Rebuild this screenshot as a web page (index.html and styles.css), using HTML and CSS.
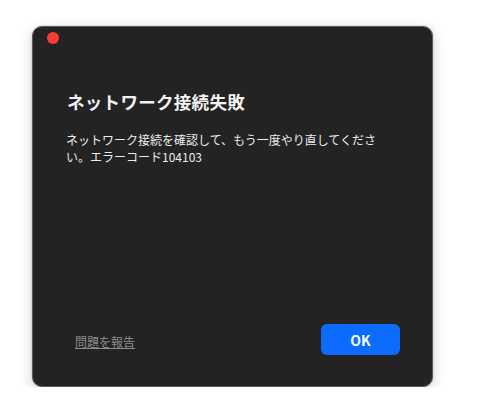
FILE: index.html
```html
<!DOCTYPE html>
<html lang="ja">
<head>
<meta charset="utf-8">
<link rel="stylesheet" href="styles.css">
</head>
<body>
<div class="window">
  <div class="titlebar"><span class="close-dot"></span></div>
  <div class="content">
    <h1 class="title">ネットワーク接続失敗</h1>
    <p class="message">ネットワーク接続を確認して、もう一度やり直してください。エラーコード104103</p>
  </div>
  <div class="footer">
    <a class="report-link" href="#">問題を報告</a>
    <button class="ok-button" type="button">OK</button>
  </div>
</div>
</body>
</html>
```

FILE: styles.css
```css
html, body {
  margin: 0;
  padding: 0;
  background: #ffffff;
}
body {
  font-family: "Noto Sans CJK JP", "Noto Sans", sans-serif;
  padding: 26px 0 0 32px;
}
.window {
  box-sizing: border-box;
  width: 401px;
  height: 361px;
  background: #232323;
  border: 1px solid #5c5c5c;
  border-radius: 10px;
  box-shadow: 0 4px 14px rgba(0, 0, 0, 0.18), 0 0 2px rgba(0, 0, 0, 0.25);
  display: flex;
  flex-direction: column;
}
.titlebar {
  padding: 5px 0 0 14px;
  height: 12px;
}
.close-dot {
  display: block;
  width: 12px;
  height: 12px;
  border-radius: 50%;
  background: #fe3b30;
}
.content {
  padding: 47px 48px 0 34px;
  flex: 1;
}
.title {
  margin: 0;
  font-size: 17.5px;
  line-height: 22px;
  font-weight: 700;
  color: #f2f2f2;
  letter-spacing: 0.3px;
}
.message {
  margin: 18px 0 0 -1px;
  font-size: 12px;
  line-height: 17px;
  color: #ececec;
}
.footer {
  display: flex;
  align-items: center;
  justify-content: space-between;
  padding: 0 32px 31px 42px;
}
.report-link {
  font-size: 12px;
  line-height: 17px;
  color: #8c8c8c;
  text-decoration: underline;
  margin-top: 3px;
}
.ok-button {
  width: 79px;
  height: 31px;
  border: none;
  border-radius: 6px;
  background: #0b6cff;
  color: #ffffff;
  font-family: "Noto Sans CJK JP", "Noto Sans", sans-serif;
  font-size: 14px;
  font-weight: 700;
  padding: 0;
}
```
